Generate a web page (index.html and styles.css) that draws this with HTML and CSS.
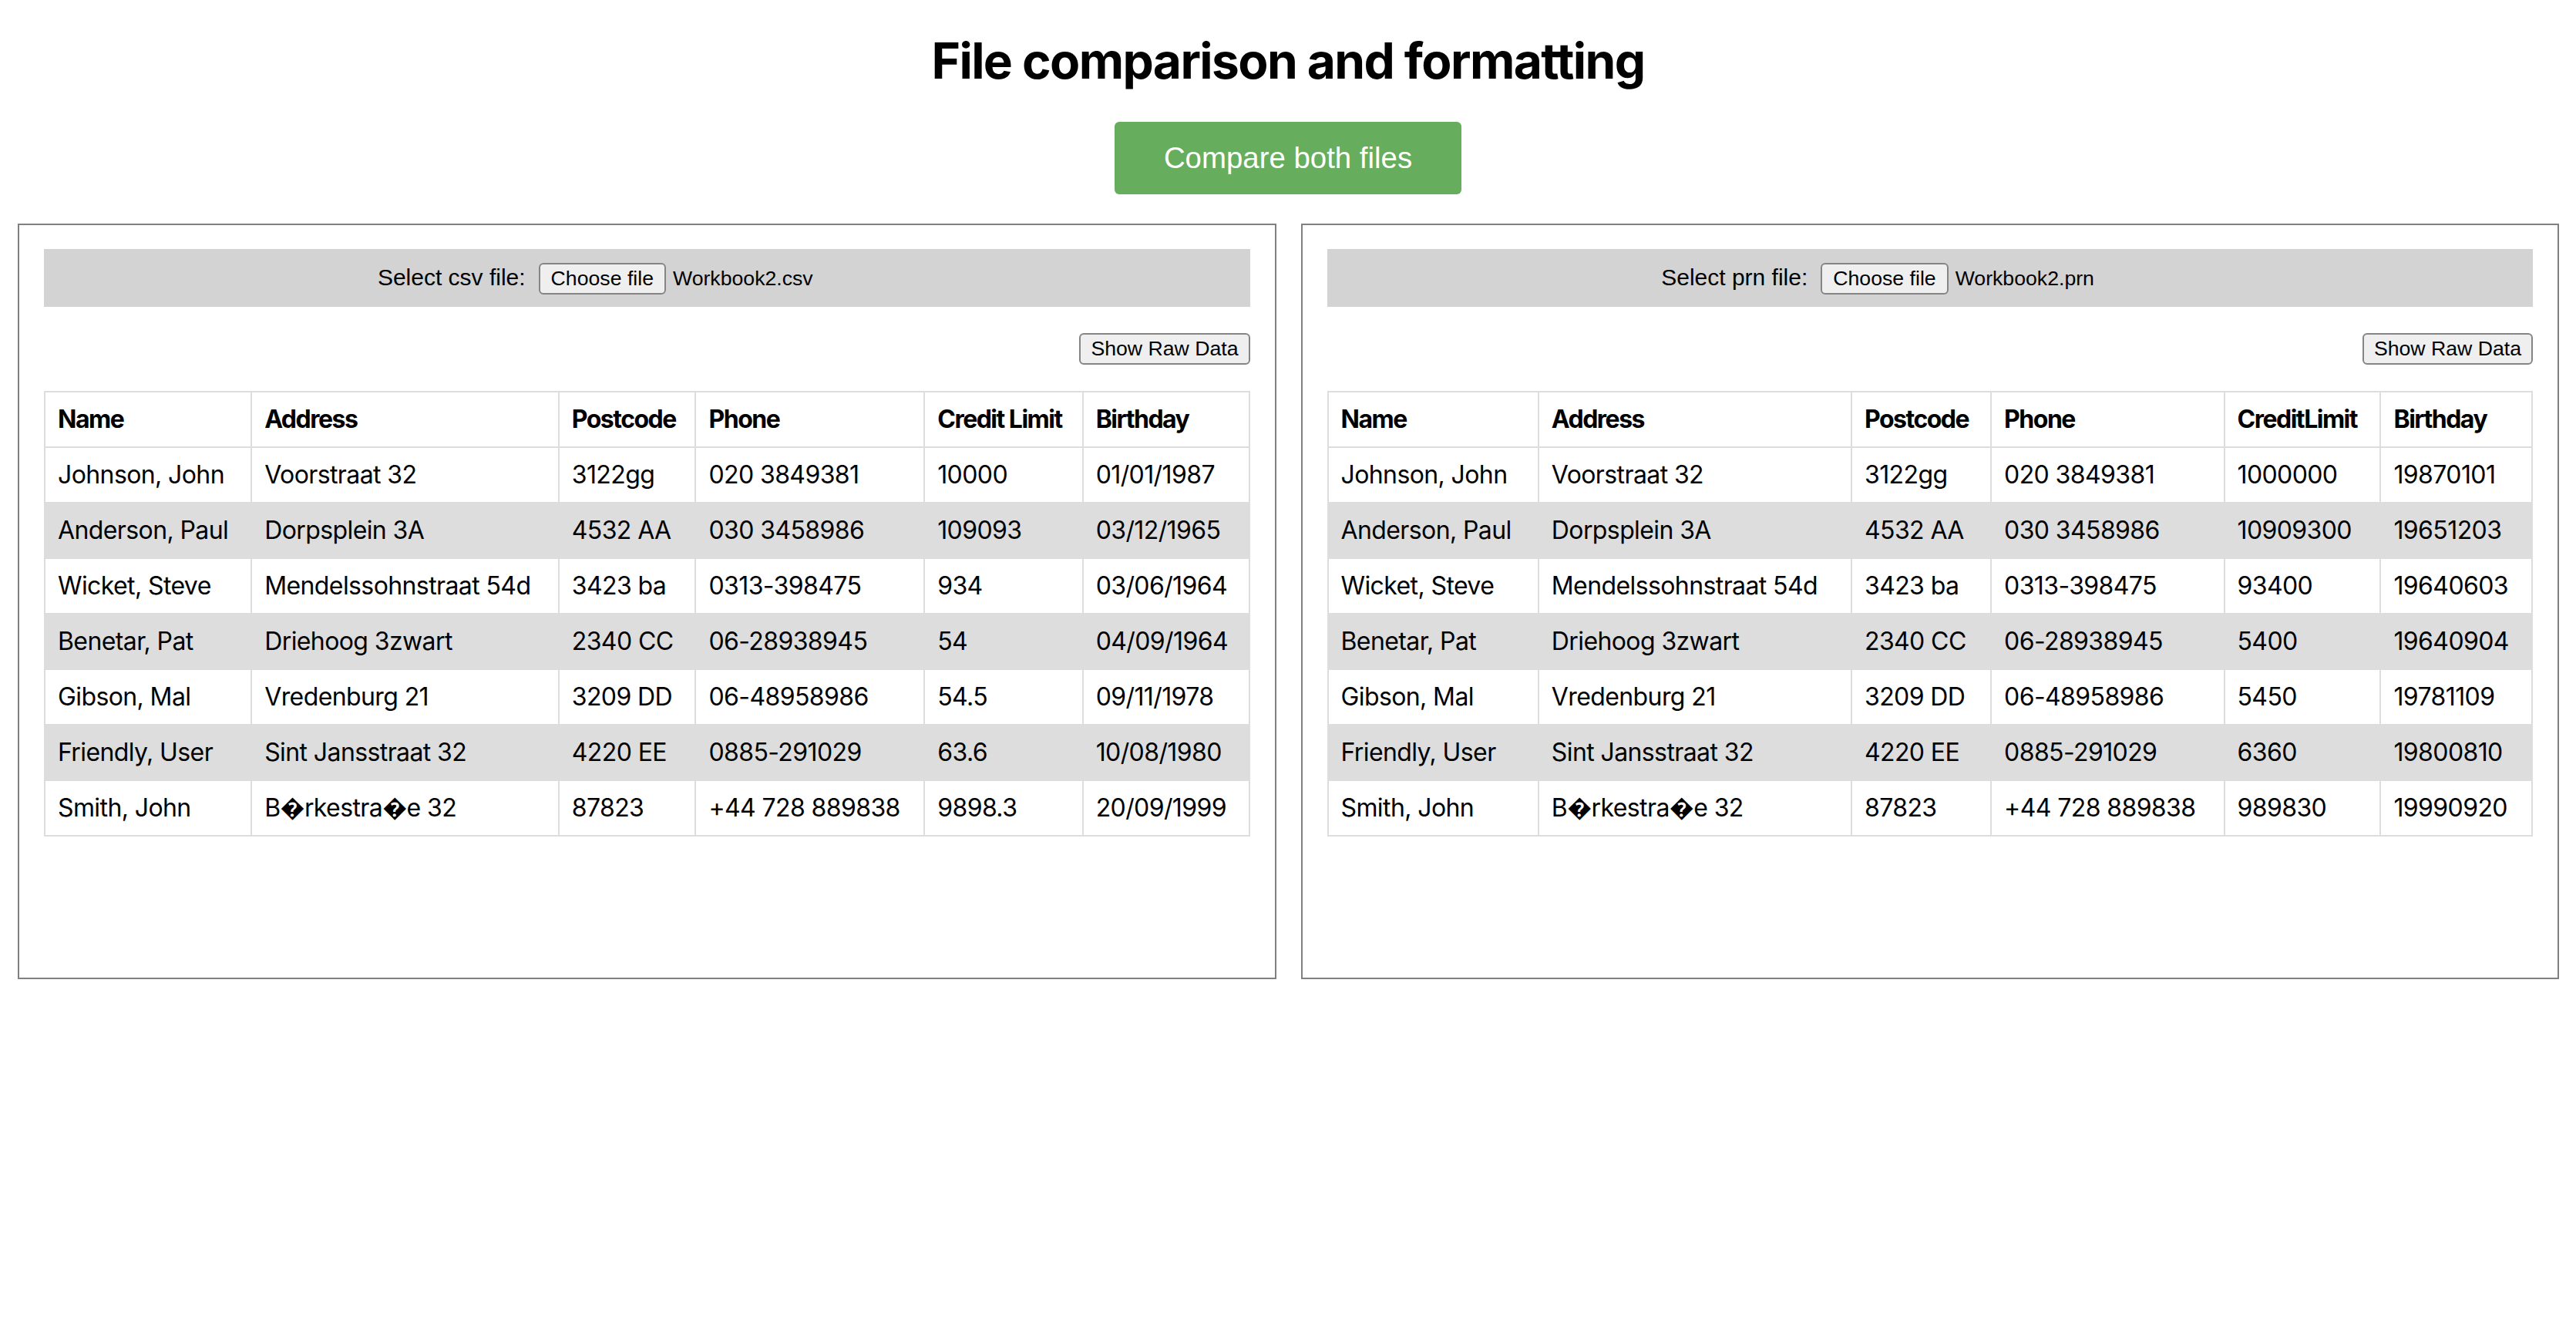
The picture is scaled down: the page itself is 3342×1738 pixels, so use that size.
FILE: index.html
```html
<!DOCTYPE html>
<html lang="en">
<head>
<meta charset="utf-8">
<title>File comparison and formatting</title>
<link rel="stylesheet" href="styles.css">
</head>
<body>
<h1 class="title">File comparison and formatting</h1>
<div class="actions">
  <button class="compare-btn" type="button">Compare both files</button>
</div>
<div class="panels">
  <section class="panel">
    <div class="file-bar">
      <div class="file-group">
        <label class="file-label">Select csv file:</label>
        <div class="file-input">
          <span class="sys-btn">Choose file</span>
          <span class="file-name">Workbook2.csv</span>
        </div>
      </div>
    </div>
    <div class="raw-row">
      <button class="sys-btn" type="button">Show Raw Data</button>
    </div>
    <table class="data-table">
      <thead>
        <tr><th>Name</th><th>Address</th><th>Postcode</th><th>Phone</th><th>Credit Limit</th><th>Birthday</th></tr>
      </thead>
      <tbody>
        <tr><td>Johnson, John</td><td>Voorstraat 32</td><td>3122gg</td><td>020 3849381</td><td>10000</td><td>01/01/1987</td></tr>
        <tr><td>Anderson, Paul</td><td>Dorpsplein 3A</td><td>4532 AA</td><td>030 3458986</td><td>109093</td><td>03/12/1965</td></tr>
        <tr><td>Wicket, Steve</td><td>Mendelssohnstraat 54d</td><td>3423 ba</td><td>0313-398475</td><td>934</td><td>03/06/1964</td></tr>
        <tr><td>Benetar, Pat</td><td>Driehoog 3zwart</td><td>2340 CC</td><td>06-28938945</td><td>54</td><td>04/09/1964</td></tr>
        <tr><td>Gibson, Mal</td><td>Vredenburg 21</td><td>3209 DD</td><td>06-48958986</td><td>54.5</td><td>09/11/1978</td></tr>
        <tr><td>Friendly, User</td><td>Sint Jansstraat 32</td><td>4220 EE</td><td>0885-291029</td><td>63.6</td><td>10/08/1980</td></tr>
        <tr><td>Smith, John</td><td>B&#xFFFD;rkestra&#xFFFD;e 32</td><td>87823</td><td>+44 728 889838</td><td>9898.3</td><td>20/09/1999</td></tr>
      </tbody>
    </table>
  </section>
  <section class="panel">
    <div class="file-bar">
      <div class="file-group">
        <label class="file-label">Select prn file:</label>
        <div class="file-input">
          <span class="sys-btn">Choose file</span>
          <span class="file-name">Workbook2.prn</span>
        </div>
      </div>
    </div>
    <div class="raw-row">
      <button class="sys-btn" type="button">Show Raw Data</button>
    </div>
    <table class="data-table">
      <thead>
        <tr><th>Name</th><th>Address</th><th>Postcode</th><th>Phone</th><th>CreditLimit</th><th>Birthday</th></tr>
      </thead>
      <tbody>
        <tr><td>Johnson, John</td><td>Voorstraat 32</td><td>3122gg</td><td>020 3849381</td><td>1000000</td><td>19870101</td></tr>
        <tr><td>Anderson, Paul</td><td>Dorpsplein 3A</td><td>4532 AA</td><td>030 3458986</td><td>10909300</td><td>19651203</td></tr>
        <tr><td>Wicket, Steve</td><td>Mendelssohnstraat 54d</td><td>3423 ba</td><td>0313-398475</td><td>93400</td><td>19640603</td></tr>
        <tr><td>Benetar, Pat</td><td>Driehoog 3zwart</td><td>2340 CC</td><td>06-28938945</td><td>5400</td><td>19640904</td></tr>
        <tr><td>Gibson, Mal</td><td>Vredenburg 21</td><td>3209 DD</td><td>06-48958986</td><td>5450</td><td>19781109</td></tr>
        <tr><td>Friendly, User</td><td>Sint Jansstraat 32</td><td>4220 EE</td><td>0885-291029</td><td>6360</td><td>19800810</td></tr>
        <tr><td>Smith, John</td><td>B&#xFFFD;rkestra&#xFFFD;e 32</td><td>87823</td><td>+44 728 889838</td><td>989830</td><td>19990920</td></tr>
      </tbody>
    </table>
  </section>
</div>
</body>
</html>
```

FILE: styles.css
```css
* {
  box-sizing: border-box;
}

html, body {
  margin: 0;
  padding: 0;
  background: #ffffff;
  color: #000000;
  font-family: "Liberation Sans", Arial, sans-serif;
  font-size: 32px;
}

.title {
  margin: 40px 0 40px;
  font-family: Inter, "Noto Sans", sans-serif;
  font-weight: 700;
  font-size: 64px;
  line-height: 78px;
  text-align: center;
  letter-spacing: -1.6px;
}

.actions {
  display: flex;
  justify-content: center;
}

.compare-btn {
  width: 450px;
  height: 94px;
  border: none;
  border-radius: 6px;
  background: #66ad5e;
  color: #ffffff;
  font-family: "Liberation Sans", Arial, sans-serif;
  font-size: 38.4px;
  padding: 0;
}

.panels {
  display: flex;
  gap: 32px;
  padding: 0 22px 0 23px;
  margin-top: 38px;
}

.panel {
  flex: 1 1 0;
  min-width: 0;
  height: 980px;
  border: 2px solid #808080;
  padding: 31px 32px;
}

.file-bar {
  height: 75px;
  background: #d3d3d3;
  display: flex;
  align-items: center;
  justify-content: center;
}

.file-group {
  display: flex;
  align-items: baseline;
  gap: 17px;
  padding-top: 2px;
}

.file-label {
  font-size: 30px;
  line-height: 37px;
}

.file-input {
  width: 490px;
  display: flex;
  align-items: baseline;
  gap: 9px;
}

.sys-btn {
  display: inline-block;
  height: 41px;
  padding: 0 14px;
  border: 2px solid #858585;
  border-radius: 6px;
  background: #efefef;
  color: #000000;
  font-family: "Liberation Sans", Arial, sans-serif;
  font-size: 26.67px;
  line-height: 37px;
  white-space: nowrap;
}

.file-name {
  font-size: 26.67px;
  line-height: 37px;
  white-space: nowrap;
}

.raw-row {
  display: flex;
  justify-content: flex-end;
  margin: 34px 0;
}

.raw-row .sys-btn {
  padding: 0 13px;
}

.data-table {
  width: 100%;
  border-collapse: collapse;
  border: 2px solid #dddddd;
  font-family: Inter, "Noto Sans", "DejaVu Sans", sans-serif;
  font-size: 32px;
}

.data-table th,
.data-table td {
  border: 2px solid #dddddd;
  padding: 16px 16px;
  line-height: 38px;
  text-align: left;
  white-space: nowrap;
}

.data-table td {
  letter-spacing: -0.6px;
}

.data-table th {
  font-weight: 700;
  letter-spacing: -1.5px;
}

.data-table tbody tr:nth-child(even) {
  background: #dddddd;
}
```
